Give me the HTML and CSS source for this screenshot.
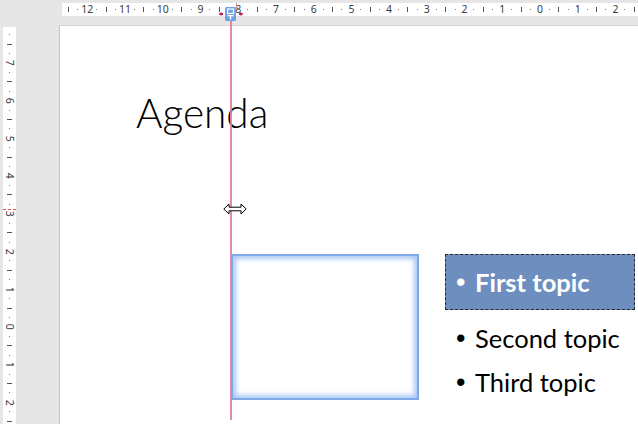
FILE: index.html
```html
<!DOCTYPE html>
<html>
<head>
<meta charset="utf-8">
<link rel="stylesheet" href="styles.css">
</head>
<body>
<div class="app">
  <div class="hruler">
    <div class="hstrip">
      <div class="htrack">
        <div class="u"><span class="n"></span><span class="d"></span><span class="t"></span><span class="d"></span></div>
        <div class="u"><span class="n">12</span><span class="d"></span><span class="t"></span><span class="d"></span></div>
        <div class="u"><span class="n">11</span><span class="d"></span><span class="t"></span><span class="d"></span></div>
        <div class="u"><span class="n">10</span><span class="d"></span><span class="t"></span><span class="d"></span></div>
        <div class="u"><span class="n">9</span><span class="d"></span><span class="t"></span><span class="d"></span></div>
        <div class="u"><span class="n">8</span><span class="d"></span><span class="t"></span><span class="d"></span></div>
        <div class="u"><span class="n">7</span><span class="d"></span><span class="t"></span><span class="d"></span></div>
        <div class="u"><span class="n">6</span><span class="d"></span><span class="t"></span><span class="d"></span></div>
        <div class="u"><span class="n">5</span><span class="d"></span><span class="t"></span><span class="d"></span></div>
        <div class="u"><span class="n">4</span><span class="d"></span><span class="t"></span><span class="d"></span></div>
        <div class="u"><span class="n">3</span><span class="d"></span><span class="t"></span><span class="d"></span></div>
        <div class="u"><span class="n">2</span><span class="d"></span><span class="t"></span><span class="d"></span></div>
        <div class="u"><span class="n">1</span><span class="d"></span><span class="t"></span><span class="d"></span></div>
        <div class="u"><span class="n">0</span><span class="d"></span><span class="t"></span><span class="d"></span></div>
        <div class="u"><span class="n">1</span><span class="d"></span><span class="t"></span><span class="d"></span></div>
        <div class="u"><span class="n">2</span><span class="d"></span><span class="t"></span><span class="d"></span></div>
      </div>
    </div>
  </div>
  <div class="vruler">
    <div class="vstrip">
      <div class="vtrack">
        <div class="v"><span class="n"></span><span class="d"></span><span class="t"></span><span class="d"></span></div>
        <div class="v"><span class="n">7</span><span class="d"></span><span class="t"></span><span class="d"></span></div>
        <div class="v"><span class="n">6</span><span class="d"></span><span class="t"></span><span class="d"></span></div>
        <div class="v"><span class="n">5</span><span class="d"></span><span class="t"></span><span class="d"></span></div>
        <div class="v"><span class="n">4</span><span class="d"></span><span class="t"></span><span class="d"></span></div>
        <div class="v"><span class="n">3</span><span class="d"></span><span class="t"></span><span class="d"></span></div>
        <div class="v"><span class="n">2</span><span class="d"></span><span class="t"></span><span class="d"></span></div>
        <div class="v"><span class="n">1</span><span class="d"></span><span class="t"></span><span class="d"></span></div>
        <div class="v"><span class="n">0</span><span class="d"></span><span class="t"></span><span class="d"></span></div>
        <div class="v"><span class="n">1</span><span class="d"></span><span class="t"></span><span class="d"></span></div>
        <div class="v"><span class="n">2</span><span class="d"></span><span class="t"></span><span class="d"></span></div>
      </div>
    </div>
  </div>
  <div class="slide">
    <div class="title">Agenda</div>
    <div class="frame"></div>
    <div class="textbox">
      <p class="item sel"><span class="bul">&bull;</span>First topic</p>
      <p class="item second"><span class="bul">&bull;</span>Second topic</p>
      <p class="item third"><span class="bul">&bull;</span>Third topic</p>
    </div>
  </div>

  <div class="guide"></div>
  <div class="vmark"></div>
  <div class="hmark"></div>
  <svg class="gmarker" width="26" height="16" viewBox="0 0 26 16">
    <path d="M0.5 8 L3.5 6 L3.5 10 Z" fill="#c0234a"/>
    <rect x="3" y="7" width="2" height="2" fill="#c0234a"/>
    <path d="M25.5 8 L22.5 6 L22.5 10 Z" fill="#c0234a"/>
    <rect x="21" y="7" width="2" height="2" fill="#c0234a"/>
    <rect x="7" y="1" width="11" height="14" rx="1.5" fill="#6ea2e3"/>
    <rect x="9.5" y="3" width="6" height="4.5" fill="none" stroke="#fff" stroke-width="1.2"/>
    <rect x="9.5" y="9" width="6" height="1.4" fill="#fff"/>
    <rect x="11.8" y="9" width="1.4" height="4.5" fill="#fff"/>
  </svg>
  <svg class="cursor" width="24" height="12" viewBox="0 0 24 12">
    <path d="M0.8 6 L6 1 L6 4.2 L18 4.2 L18 1 L23.2 6 L18 11 L18 7.8 L6 7.8 L6 11 Z" fill="#fff" stroke="#000" stroke-width="1" stroke-linejoin="miter"/>
  </svg>
</div>
</body>
</html>
```

FILE: styles.css
```css
html, body {
  margin: 0;
  padding: 0;
}
body {
  background: #e6e6e6;
  font-family: "Noto Sans", "DejaVu Sans", sans-serif;
}
.app {
  position: relative;
  width: 638px;
  height: 424px;
  overflow: hidden;
  display: grid;
  grid-template-columns: 59px 1fr;
  grid-template-rows: 25px 1fr;
}
.hruler {
  grid-column: 1 / 3;
  padding: 3px 0 0 62px;
}
.hstrip {
  height: 13px;
  background: #fff;
  overflow: hidden;
}
.htrack {
  display: flex;
  margin-left: -17.08px;
  height: 13px;
}
.u {
  flex: 0 0 37.72px;
  min-width: 0;
  display: flex;
  height: 13px;
}
.u > span {
  flex: 0 0 9.43px;
  min-width: 0;
  width: 9.43px;
  display: flex;
  align-items: center;
  justify-content: center;
}
.n {
  font-size: 10.5px;
  color: #3c3c3c;
  line-height: 13px;
  white-space: nowrap;
}
.u .d::before {
  content: "";
  width: 1px;
  height: 1px;
  background: #7a7a7a;
}
.u .t::before {
  content: "";
  width: 1px;
  height: 5px;
  background: #555;
}
.vruler {
  padding: 2px 0 0 3px;
}
.vstrip {
  width: 13px;
  height: 100%;
  background: #fff;
  overflow: hidden;
}
.vtrack {
  display: flex;
  flex-direction: column;
  margin-top: -6.5px;
}
.v {
  flex: 0 0 37.72px;
  min-height: 0;
  height: 37.72px;
  display: flex;
  flex-direction: column;
  width: 13px;
}
.v > span {
  flex: 0 0 9.43px;
  min-height: 0;
  height: 9.43px;
  display: flex;
  align-items: center;
  justify-content: center;
}
.v .n {
  transform: rotate(90deg);
  line-height: 9.43px;
}
.v .d::before {
  content: "";
  width: 1px;
  height: 1px;
  background: #7a7a7a;
}
.v .t::before {
  content: "";
  width: 5px;
  height: 1px;
  background: #555;
}
.slide {
  position: relative;
  background: #fff;
  border-top: 1px solid #d2d2d2;
  border-left: 1px solid #c4c4c4;
}
.title {
  position: absolute;
  left: 76px;
  top: 63px;
  font-family: "Lato", sans-serif;
  font-weight: 300;
  font-size: 40.5px;
  line-height: 48px;
  color: #000;
}
.frame {
  position: absolute;
  left: 171px;
  top: 228px;
  width: 184px;
  height: 142px;
  border: 2px solid #7eaae9;
  box-shadow: inset 0 0 5px 3px #aac9f4;
  background: #fff;
}
.textbox {
  position: absolute;
  left: 385px;
  top: 228px;
  width: 190px;
  display: flex;
  flex-direction: column;
}
.item {
  margin: 0;
  display: flex;
  align-items: center;
  font-family: "Lato", sans-serif;
  font-size: 25.5px;
  line-height: 44px;
  color: #000;
  padding-left: 10px;
  white-space: nowrap;
}
.bul {
  width: 19px;
  flex: 0 0 19px;
  font-family: "Liberation Sans", sans-serif;
  font-size: 27px;
  font-weight: 400;
  padding-left: 1px;
}
.sel {
  background: #6d8ebf;
  border: 1px dashed #2a2a2a;
  color: #fff;
  font-weight: 700;
  height: 54px;
  line-height: 54px;
  padding-left: 9px;
}
.second {
  margin-top: 6px;
}
.guide {
  position: absolute;
  left: 230px;
  top: 21px;
  width: 2px;
  height: 399px;
  background: #e07ea2;
  opacity: 0.9;
}
.vmark {
  position: absolute;
  left: 3px;
  top: 209px;
  width: 13px;
  border-top: 1px dashed #d9534f;
}
.hmark {
  position: absolute;
  left: 236px;
  top: 3px;
  height: 5px;
  border-left: 1px dashed #e08aa0;
}
.gmarker {
  position: absolute;
  left: 218px;
  top: 6px;
}
.cursor {
  position: absolute;
  left: 223px;
  top: 203px;
}
```
